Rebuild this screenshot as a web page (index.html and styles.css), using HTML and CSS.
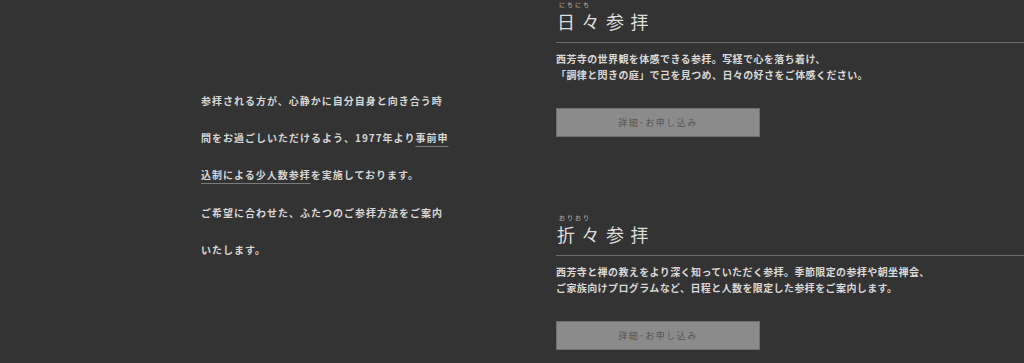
FILE: index.html
```
<!DOCTYPE html>
<html lang="ja">
<head>
<meta charset="utf-8">
<title>参拝のご案内</title>
<link rel="stylesheet" href="styles.css">
</head>
<body>
<main class="visit">
	<div class="visit-intro">
		<p>参拝される方が、心静かに自分自身と向き合う時<br>間をお過ごしいただけるよう、1977年より<span class="mark">事前申<br>込制による少人数参拝</span>を実施しております。<br>ご希望に合わせた、ふたつのご参拝方法をご案内<br>いたします。</p>
	</div>
	<div class="visit-plans">
		<section class="plan">
			<div class="plan-ruby">にちにち</div>
			<h2 class="plan-title">日々参拝</h2>
			<p class="plan-text">西芳寺の世界観を体感できる参拝。写経で心を落ち着け、<br>「調律と閃きの庭」で己を見つめ、日々の好さをご体感ください。</p>
			<a class="plan-button" href="#">詳細･お申し込み</a>
		</section>
		<section class="plan">
			<div class="plan-ruby">おりおり</div>
			<h2 class="plan-title">折々参拝</h2>
			<p class="plan-text">西芳寺と禅の教えをより深く知っていただく参拝。季節限定の参拝や朝坐禅会、<br>ご家族向けプログラムなど、日程と人数を限定した参拝をご案内します。</p>
			<a class="plan-button" href="#">詳細･お申し込み</a>
		</section>
	</div>
</main>
</body>
</html>
```

FILE: styles.css
```
body {
	margin: 0;
	background: #333333;
	color: #dcdcdc;
	font-family: "Noto Sans CJK JP", "Noto Sans", sans-serif;
}

.visit {
	display: flex;
	align-items: center;
	padding-left: 201px;
}

.visit-intro {
	width: 354px;
	flex: none;
}
.visit-intro p {
	margin: 0;
	white-space: nowrap;
	font-size: 10px;
	font-weight: 700;
	letter-spacing: 1px;
	line-height: 37.2px;
	color: #d6d6d6;
}
.visit-intro .mark {
	text-decoration: underline;
	text-decoration-color: #7a7a7a;
	text-underline-offset: 4px;
	text-decoration-thickness: 1px;
}

.visit-plans {
	flex: 1;
	padding-left: 1px;
}

.plan + .plan {
	margin-top: 76px;
}
.plan-ruby {
	font-size: 6px;
	line-height: 8px;
	letter-spacing: 2px;
	padding: 1px 0 0 3px;
	color: #bdbdbd;
}
.plan-title {
	margin: 0;
	padding: 0 0 9px 1px;
	border-bottom: 1px solid #6c6c6c;
	font-size: 18px;
	font-weight: 400;
	line-height: 24px;
	letter-spacing: 6.5px;
	color: #dedede;
}
.plan-text {
	margin: 8px 0 0;
	font-size: 10px;
	font-weight: 700;
	line-height: 16px;
	letter-spacing: 0.4px;
	color: #d8d8d8;
}
.plan-button {
	display: flex;
	justify-content: center;
	align-items: center;
	box-sizing: border-box;
	width: 204px;
	height: 29px;
	margin-top: 25px;
	background: #8b8b8b;
	border: 1px solid #6f6f6f;
	color: #575757;
	font-size: 9px;
	letter-spacing: 1.5px;
	text-decoration: none;
}
```
